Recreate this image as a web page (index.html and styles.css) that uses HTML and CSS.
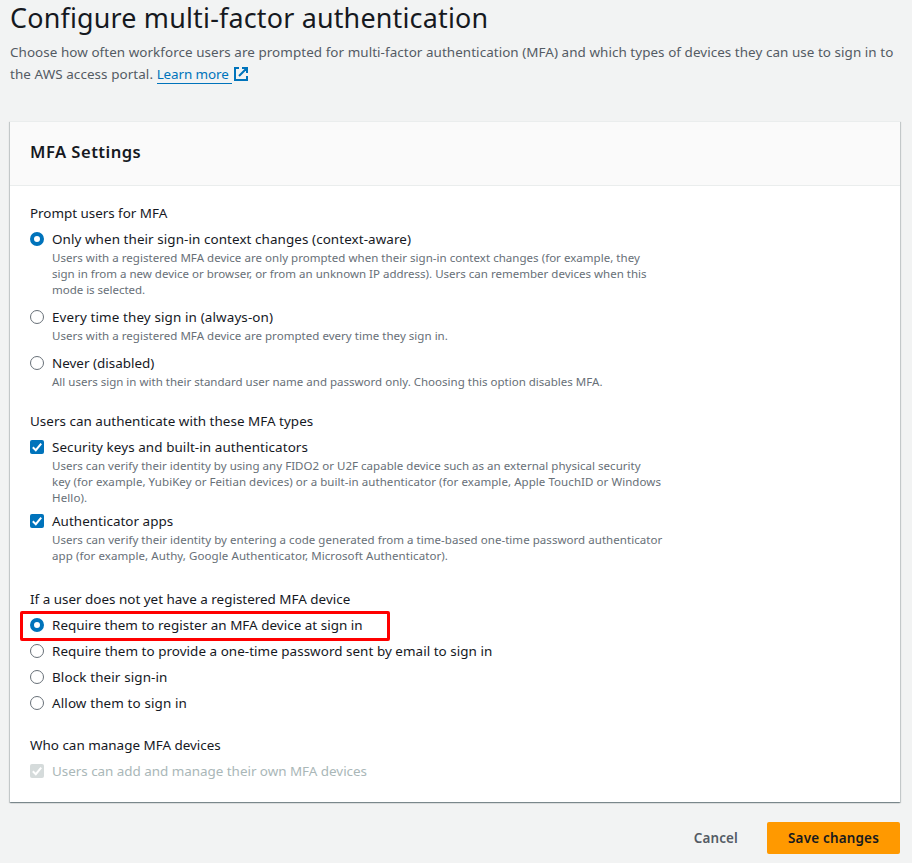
FILE: index.html
```html
<!DOCTYPE html>
<html lang="en">
<head>
<meta charset="utf-8">
<title>Configure multi-factor authentication</title>
<link rel="stylesheet" href="styles.css">
</head>
<body>
<svg class="defs" aria-hidden="true">
  <symbol id="tick" viewBox="0 0 14 14"><path d="M2.8 7.3 5.8 10.2 11.2 3.6" fill="none" stroke="#fff" stroke-width="2"/></symbol>
</svg>
<main class="page">
  <header class="intro">
    <h1>Configure multi-factor authentication</h1>
    <p><span class="line t2">Choose how often workforce users are prompted for multi-factor authentication (MFA) and which types of devices they can use to sign in to</span>
    <span class="line t3">the AWS access portal. <a class="link" href="#">Learn more</a><svg class="external" viewBox="0 0 14 14"><path d="M5 1H1v12h12V9M8 1h5v5M13 1 5 9" fill="none" stroke="#0073bb" stroke-width="2"/></svg></span></p>
  </header>

  <section class="card">
    <div class="card-head"><h2>MFA Settings</h2></div>
    <div class="card-body">
      <div class="group">
        <div class="label t0">Prompt users for MFA</div>
        <div class="options spacious">
          <div class="option">
            <span class="radio on"></span>
            <div><div class="name t3">Only when their sign-in context changes (context-aware)</div>
              <div class="desc"><span class="line t1">Users with a registered MFA device are only prompted when their sign-in context changes (for example, they</span><span class="line">sign in from a new device or browser, or from an unknown IP address). Users can remember devices when this</span><span class="line t0">mode is selected.</span></div></div>
          </div>
          <div class="option">
            <span class="radio"></span>
            <div><div class="name t4">Every time they sign in (always-on)</div>
              <div class="desc"><span class="line t1">Users with a registered MFA device are prompted every time they sign in.</span></div></div>
          </div>
          <div class="option">
            <span class="radio"></span>
            <div><div class="name">Never (disabled)</div>
              <div class="desc"><span class="line">All users sign in with their standard user name and password only. Choosing this option disables MFA.</span></div></div>
          </div>
        </div>
      </div>

      <div class="group checks">
        <div class="label t1">Users can authenticate with these MFA types</div>
        <div class="options">
          <div class="option">
            <span class="check"><svg><use href="#tick"/></svg></span>
            <div><div class="name t3">Security keys and built-in authenticators</div>
              <div class="desc"><span class="line t1">Users can verify their identity by using any FIDO2 or U2F capable device such as an external physical security</span><span class="line t2">key (for example, YubiKey or Feitian devices) or a built-in authenticator (for example, Apple TouchID or Windows</span><span class="line t4">Hello).</span></div></div>
          </div>
          <div class="option">
            <span class="check"><svg><use href="#tick"/></svg></span>
            <div><div class="name t1">Authenticator apps</div>
              <div class="desc"><span class="line t1b">Users can verify their identity by entering a code generated from a time-based one-time password authenticator</span><span class="line t3">app (for example, Authy, Google Authenticator, Microsoft Authenticator).</span></div></div>
          </div>
        </div>
      </div>

      <div class="group">
        <div class="label">If a user does not yet have a registered MFA device</div>
        <div class="options">
          <div class="option highlighted"><span class="radio on"></span><div class="name t1">Require them to register an MFA device at sign in</div></div>
          <div class="option"><span class="radio"></span><div class="name t1b">Require them to provide a one-time password sent by email to sign in</div></div>
          <div class="option"><span class="radio"></span><div class="name t4">Block their sign-in</div></div>
          <div class="option"><span class="radio"></span><div class="name t4">Allow them to sign in</div></div>
        </div>
      </div>

      <div class="group">
        <div class="label">Who can manage MFA devices</div>
        <div class="options">
          <div class="option disabled"><span class="check"><svg><use href="#tick"/></svg></span><div class="name t0">Users can add and manage their own MFA devices</div></div>
        </div>
      </div>
    </div>
  </section>

  <footer class="actions">
    <button class="btn">Cancel</button>
    <button class="btn primary">Save changes</button>
  </footer>
</main>
</body>
</html>
```
FILE: styles.css
```css
* { box-sizing: border-box; }
body {
  margin: 0;
  background: #f2f3f3;
  color: #16191f;
  font: 13.44px/22px "Noto Sans", "Open Sans", sans-serif;
}
.defs { display: none; }
.page { height: 863px; padding: 0 12px 0 10px; overflow: hidden; }
.line { display: block; white-space: nowrap; }

/* letter tracking steps */
.t0 { letter-spacing: -0.03px; }
.t1 { letter-spacing: 0.026px; }
.t1b { letter-spacing: 0.038px; }
.t2 { letter-spacing: 0.055px; }
.t3 { letter-spacing: 0.075px; }
.t4 { letter-spacing: 0.12px; }

.intro { height: 121px; }
h1 {
  margin: 0;
  padding-bottom: 5px;
  font-size: 26.9px;
  font-weight: 400;
  line-height: 36px;
  letter-spacing: 0.19px;
}
.intro p { margin: 0; color: #545b64; }
.link {
  display: inline-block;
  height: 21px;
  padding-right: 3px;
  color: #0073bb;
  letter-spacing: -0.1px;
  text-decoration: none;
  border-bottom: 1px solid #0073bb;
  vertical-align: top;
}
.external { width: 14px; height: 14px; margin-left: 2px; vertical-align: -2px; }

.card {
  height: 681px;
  background: #fff;
  border-top: 1px solid #eaeded;
  box-shadow: 0 1px 1px 0 rgba(0, 28, 36, .3), 1px 1px 1px 0 rgba(0, 28, 36, .15), -1px 1px 1px 0 rgba(0, 28, 36, .15);
}
.card-head {
  height: 64px;
  padding: 19px 20px;
  background: #fafafa;
  border-bottom: 1px solid #eaeded;
}
h2 { margin: 0; font-size: 16.6px; font-weight: 600; line-height: 22px; letter-spacing: 0.47px; }
.card-body { padding: 16px 20px; }
.group { margin-bottom: 20px; }
.group.checks { margin-bottom: 24px; }
.options { display: flex; flex-direction: column; gap: 4px; margin-top: 4px; }
.options.spacious { gap: 8px; }
.option { display: flex; gap: 8px; position: relative; }
.name { white-space: nowrap; }
.desc { color: #687078; font-size: 11.52px; line-height: 16px; }
.radio, .check { flex: none; width: 14px; height: 14px; margin-top: 4px; }
.radio { border: 1px solid #687078; border-radius: 50%; background: #fff; }
.radio.on { border: 4px solid #0073bb; }
.check { background: #0073bb; border-radius: 2px; }
.check svg { display: block; width: 14px; height: 14px; }
.disabled .name { color: #aab7b8; }
.disabled .check { background: #d5dbdb; }
.highlighted::after {
  content: "";
  box-sizing: border-box;
  position: absolute;
  left: -10px;
  top: -3px;
  width: 370px;
  height: 30px;
  border: 3px solid #f00;
  border-radius: 2px;
}

.actions { display: flex; justify-content: flex-end; gap: 9px; padding-top: 20px; }
.btn {
  height: 32px;
  padding: 0 20px;
  border: 0;
  border-radius: 2px;
  background: none;
  color: #545b64;
  font: 600 13.44px/22px "Noto Sans", "Open Sans", sans-serif;
  letter-spacing: 0.15px;
}
.btn.primary { width: 133px; background: #ff9900; color: #16191f; letter-spacing: 0.2px; }
```
